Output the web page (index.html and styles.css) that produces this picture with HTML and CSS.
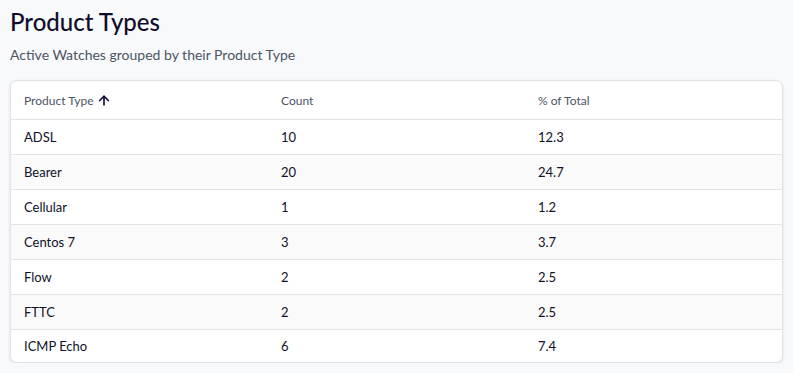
FILE: index.html
```html
<!DOCTYPE html>
<html lang="en">
<head>
    <meta charset="UTF-8">
    <meta name="viewport" content="width=device-width, initial-scale=1.0">
    <title>Product Types</title>
    <link rel="stylesheet" href="styles.css">
</head>
<body>
    <div class="page">
        <h1>Product Types</h1>
        <p class="subtitle">Active Watches grouped by their Product Type</p>

        <div class="card">
            <table class="types-table">
                <thead>
                    <tr>
                        <th>
                            Product Type
                            <!-- sort arrow -->
                            <svg class="sort-icon" width="12" height="11" viewBox="0 0 12 11">
                                <path d="M6 10.5V1.3M1.2 6L6 1.2L10.8 6" fill="none" stroke="#14123a" stroke-width="1.7"/>
                            </svg>
                        </th>
                        <th>Count</th>
                        <th>% of Total</th>
                    </tr>
                </thead>
                <tbody>
                    <tr><td>ADSL</td><td>10</td><td>12.3</td></tr>
                    <tr><td>Bearer</td><td>20</td><td>24.7</td></tr>
                    <tr><td>Cellular</td><td>1</td><td>1.2</td></tr>
                    <tr><td>Centos 7</td><td>3</td><td>3.7</td></tr>
                    <tr><td>Flow</td><td>2</td><td>2.5</td></tr>
                    <tr><td>FTTC</td><td>2</td><td>2.5</td></tr>
                    <tr><td>ICMP Echo</td><td>6</td><td>7.4</td></tr>
                </tbody>
            </table>
        </div>
    </div>
</body>
</html>
```

FILE: styles.css
```css
body {
    margin: 0;
    padding: 0;
    background-color: #f8f9fb;
    font-family: Lato, "Liberation Sans", sans-serif;
}

.page {
    padding: 7px 10px 0 10px;
}

h1 {
    margin: 0;
    font-size: 24px;
    font-weight: 500;
    line-height: 30px;
    color: #0f0d2b;
}

.subtitle {
    margin: 8px 0 0 0;
    font-size: 14px;
    line-height: 20px;
    color: #4b5563;
}

.card {
    margin-top: 15px;
    background-color: white;
    border: 1px solid #e3e4e8;
    border-radius: 7px;
    box-shadow: 0 1px 3px rgba(0, 0, 0, 0.12);
    overflow: hidden;
}

.types-table {
    width: 100%;
    border-collapse: collapse;
    table-layout: fixed;
}

.types-table th {
    height: 38px;
    padding: 0 13px;
    text-align: left;
    font-size: 12px;
    font-weight: 400;
    color: #4b5563;
    border-bottom: 1px solid #e3e4e8;
}

.types-table td {
    height: 34px;
    padding: 0 13px;
    font-size: 13px;
    color: #111127;
    border-bottom: 1px solid #e3e4e8;
}

.types-table tbody tr:nth-child(even) {
    background-color: #fafafa;
}

.types-table tbody tr:last-child td {
    border-bottom: none;
    height: 32px;
}

.sort-icon {
    margin-left: 1px;
    vertical-align: -1px;
}
```
